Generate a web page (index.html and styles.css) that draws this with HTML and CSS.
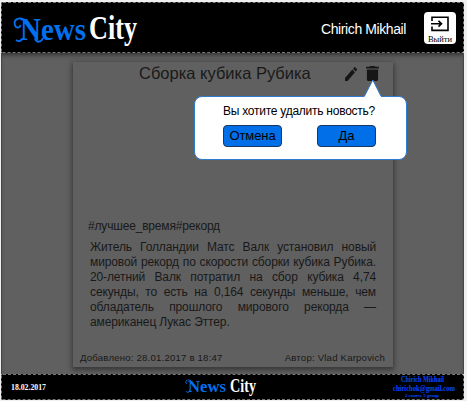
FILE: index.html
```
<!DOCTYPE html>
<html lang="ru">
<head>
<meta charset="utf-8">
<title>News City</title>
<link rel="stylesheet" href="styles.css">
</head>
<body>
<div class="page">
  <header class="header">
    <svg class="logo" width="126" height="42" viewBox="0 0 126 42">
      <text class="blue" x="6" y="28" font-size="32" textLength="66" lengthAdjust="spacingAndGlyphs">News</text>
      <path class="flourish" d="M11 8C5 4-1 8 1 13c1 4 6 3 5 0M9 26c-1 3-4 4-7 2M21 26c1 5 6 5 8 0"/>
      <text class="white" x="75" y="27" font-size="33" textLength="48" lengthAdjust="spacingAndGlyphs">City</text>
    </svg>
    <div class="user">Chirich Mikhail</div>
    <button class="exit">
      <svg width="18" height="16" viewBox="0 0 18 16"><path d="M1 5V1.200h16v13.200H1V10.500M0 7.700h10M7.500 4.800l3 2.900-3 2.900" fill="none" stroke="#000" stroke-width="1.600"/></svg>
      <span>Выйти</span>
    </button>
  </header>
  <main class="main">
    <article class="card">
      <div class="top">
        <h1>Сборка кубика Рубика</h1>
        <svg class="pencil" width="12" height="14" viewBox="3 3 18 18" preserveAspectRatio="none"><path d="M3 17.250V21h3.750L17.810 9.940l-3.750-3.750L3 17.250zM20.710 7.040a1 1 0 0 0 0-1.410l-2.340-2.340a1 1 0 0 0-1.410 0l-1.830 1.830 3.750 3.750 1.830-1.830z"/></svg>
        <div class="remove">
          <svg width="12" height="14" viewBox="0 0 12 14"><path d="M0 .8h3L4 0h4l1 .8h3v1.600H0zM.8 3.200h10.400V12.500q0 1.500-1.500 1.500H2.300Q.8 14 .8 12.500z"/></svg>
          <div class="popup">
            <svg class="tail" width="18" height="18" viewBox="0 0 18 18"><path d="M.5 17.500L8.800 1 17 17.500V18H.5z" fill="#fff"/><path d="M.5 17L8.800 1 17 17" fill="none" stroke="#2f7bd0"/></svg>
            <p>Вы хотите удалить новость?</p>
            <div class="actions"><button>Отмена</button><button>Да</button></div>
          </div>
        </div>
      </div>
      <div class="tags">#лучшее_время#рекорд</div>
      <div class="text">
        <p>Житель Голландии Матс Валк установил новый</p>
        <p>мировой рекорд по скорости сборки кубика Рубика.</p>
        <p>20-летний Валк потратил на сбор кубика 4,74</p>
        <p>секунды, то есть на 0,164 секунды меньше, чем</p>
        <p>обладатель прошлого мирового рекорда —</p>
        <p class="last">американец Лукас Эттер.</p>
      </div>
      <div class="meta"><span>Добавлено: 28.01.2017 в 18:47</span><span>Автор: Vlad Karpovich</span></div>
    </article>
  </main>
  <footer class="footer">
    <svg width="461" height="24" viewBox="0 0 461 24">
      <text class="white" x="9" y="15" font-size="9" textLength="35" lengthAdjust="spacingAndGlyphs">18.02.2017</text>
      <text class="blue" x="186" y="17" font-size="17" textLength="38" lengthAdjust="spacingAndGlyphs">News</text>
      <path class="flourish thin" d="M189 6c-4-3-7 1-4 3M188 15c-1 3-3 3-4 1"/>
      <text class="white" x="228" y="17" font-size="18" textLength="26" lengthAdjust="spacingAndGlyphs">City</text>
      <text class="blue contact" x="399" y="7" font-size="7.500" textLength="43" lengthAdjust="spacingAndGlyphs">Chirich Mikhail</text>
      <text class="blue contact" x="391" y="15.500" font-size="7.500" textLength="62" lengthAdjust="spacingAndGlyphs">chirichok@gmail.com</text>
      <text class="blue contact" x="403" y="22" font-size="5" textLength="34" lengthAdjust="spacingAndGlyphs">2 course 5 group</text>
    </svg>
  </footer>
</div>
</body>
</html>
```

FILE: styles.css
```
* { box-sizing: border-box; }
body {
  margin: 0;
  background: #f0f0f0;
  font-family: "Liberation Sans", Arial, sans-serif;
  color: #191919;
  overflow: hidden;
}
p, h1 { margin: 0; font-weight: normal; }
button { font-family: inherit; padding: 0; color: #000; }
.page { width: 463px; height: 398px; margin: 2px 0 0 1px; }
.header {
  display: flex;
  height: 51px;
  background: #000;
  border: 1px dashed #777;
  border-radius: 2px;
}
.logo { margin: 9px 0 0 12px; overflow: visible; }
.logo text, .footer text { font-family: "Liberation Serif", serif; font-weight: bold; }
.blue { fill: #0070ee; }
.white { fill: #fff; }
.flourish { fill: none; stroke: #0070ee; stroke-width: 1.8px; }
.thin { stroke-width: 1px; }
.user {
  width: 88px;
  margin: 17px 15px 0 auto;
  color: #fff;
  font-size: 14px;
  letter-spacing: -.4px;
  line-height: 19px;
  white-space: nowrap;
}
.exit {
  display: flex;
  flex-direction: column;
  align-items: center;
  width: 32px;
  height: 32px;
  margin: 9px 7px 0 0;
  padding-top: 4px;
  border: 0;
  border-radius: 4px;
  background: #fff;
  font: 8.5px/10px "Liberation Serif", serif;
}
.exit svg { flex: none; }
.exit span { margin-top: 2px; }
.main {
  height: 321px;
  padding: 9px 0 0 71px;
  background: #606060;
  border: 1px solid #474747;
  border-top: 0;
  border-bottom: 0;
  box-shadow: inset 0 4px 4px -2px #333;
}
.card {
  display: flex;
  flex-direction: column;
  width: 320px;
  height: 305px;
  background: #606060;
  box-shadow: 0 2px 5px 1px #363636;
}
.top { display: flex; height: 156px; padding-left: 66px; }
h1 { width: 206px; margin-top: 1px; font-size: 16.5px; line-height: 20px; white-space: nowrap; }
.pencil { margin-top: 5px; fill: #161616; }
.remove { position: relative; margin: 4px 0 0 9px; height: 14px; }
.remove > svg { display: block; width: 13px; height: 15px; fill: #161616; }
.popup {
  position: absolute;
  top: 30px;
  left: -172px;
  width: 213px;
  height: 64px;
  padding-top: 6px;
  background: #fff;
  border: 1px solid #2f7bd0;
  border-radius: 8px;
  color: #000;
  text-align: center;
  font-size: 12px;
  line-height: 16px;
}
.popup p { padding-right: 3px; letter-spacing: -.25px; white-space: nowrap; }
.tail { position: absolute; top: -18px; left: 169px; }
.actions { display: flex; gap: 35px; margin: 6px 0 0 28px; }
.actions button {
  width: 59px;
  height: 22px;
  border: 1px solid #17395f;
  border-radius: 4px;
  background: #006fe8;
  font-size: 13px;
  line-height: 18px;
}
.actions button:first-child { letter-spacing: -.1px; }
.tags { margin-left: 15px; font-size: 12px; letter-spacing: -.18px; line-height: 16px; white-space: nowrap; }
.text { width: 286px; margin: 6px 0 0 17px; font-size: 12px; letter-spacing: -.12px; line-height: 15px; }
.text p { text-align-last: justify; white-space: nowrap; }
.text .last { text-align-last: left; }
.meta {
  display: flex;
  justify-content: space-between;
  margin: auto 8px 3px 7px;
  font-size: 9.6px;
  letter-spacing: .2px;
  line-height: 13px;
  white-space: nowrap;
}
.footer {
  height: 26px;
  background: #000;
  border: 1px dashed #777;
  border-radius: 2px;
}
.footer svg { display: block; overflow: visible; }
.footer .contact { fill: #0048ff; }
```
